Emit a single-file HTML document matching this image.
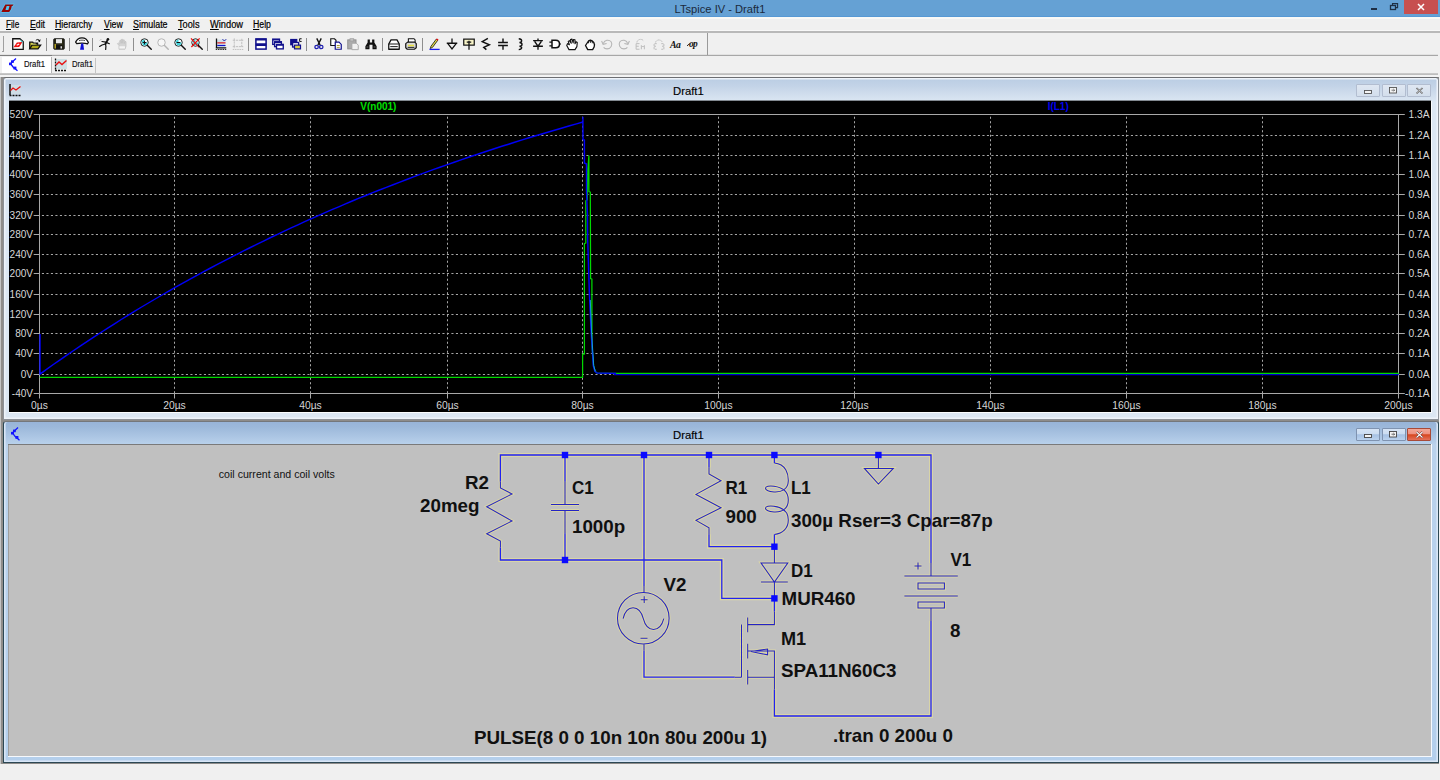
<!DOCTYPE html>
<html><head><meta charset="utf-8"><title>LTspice IV - Draft1</title>
<style>
html,body{margin:0;padding:0;}
body{width:1440px;height:780px;overflow:hidden;background:#f0f0f0;font-family:"Liberation Sans",sans-serif;position:relative;}
.abs{position:absolute;}
#titlebar{left:0;top:0;width:1440px;height:17px;background:#65a1d4;}
#title{left:0;top:0.6px;width:1440px;height:17px;line-height:17px;text-align:center;font-size:11.15px;color:#1b2a3c;letter-spacing:0px;}
#menubar{left:0;top:17px;width:1440px;height:15px;background:#f0f0f0;}
.mi{position:absolute;top:17.9px;height:13px;line-height:13px;font-size:10px;color:#000;white-space:nowrap;-webkit-text-stroke:0.2px #000;}
.mi u{text-decoration:underline;}
#toolbar{left:0;top:33px;width:1440px;height:22px;background:#f0f0f0;}
.hl{position:absolute;left:0;width:1440px;height:1px;}
.sep{position:absolute;top:37.5px;width:1px;height:13px;background:#8e8e8e;}
.ico{position:absolute;width:12px;height:12px;overflow:visible;}
#tabs{left:0;top:56px;width:1440px;height:19px;background:#f0f0f0;}
.tab{position:absolute;top:56.2px;height:17px;font-size:9.4px;line-height:16px;color:#111;white-space:nowrap;transform:scaleX(0.82);transform-origin:0 0;-webkit-text-stroke:0.15px #111;}
#mdi{left:0;top:76px;width:1438.5px;height:688px;background:#8e8c8a;border-left:1px solid #c4c4c4;box-sizing:border-box;}
.win{position:absolute;border-radius:3px 3px 0 0;}
.wtitle{position:absolute;font-size:11.3px;color:#000;white-space:nowrap;-webkit-text-stroke:0.15px #000;}
.wbtn{position:absolute;height:12px;width:22px;border:1px solid #8e9cb0;box-sizing:border-box;border-radius:1px;}
svg text{font-family:"Liberation Sans",sans-serif;}
#status{left:0;top:764px;width:1440px;height:16px;background:#f0f0f0;}
</style></head>
<body>
<div id="titlebar" class="abs"></div>
<div id="title" class="abs"><span id="tt">LTspice IV - Draft1</span></div>
<svg class="abs" style="left:0;top:0" width="16" height="17" viewBox="0 0 16 17">
<path d="M5.3 4.6 L13.6 4.4 L12.9 5.800 L11.800 6 L11 9.300 L9.200 12 L1.400 12 L1.800 11 Z" fill="none" stroke="#58c8f4" stroke-width="1.600" stroke-linejoin="round" opacity="0.8"/>
<path d="M5.3 4.6 L13.6 4.4 L12.9 5.800 L11.800 6 L11 9.300 L9.200 12 L1.400 12 L1.800 11 Z" fill="#960404"/>
<path d="M6.600 5.900 L9.500 5.900 L8.400 9.900 L5.500 9.900 Z" fill="#52c4f0"/>
</svg>
<div class="abs" style="left:1404px;top:0;width:34px;height:14px;background:#c75050;"></div>
<svg class="abs" style="left:1360px;top:0" width="80" height="17" viewBox="0 0 80 17">
<rect x="11" y="8" width="6" height="2" fill="#1e2f45"/>
<rect x="30.5" y="5.5" width="5" height="4" fill="none" stroke="#1e2f45" stroke-width="1.3"/>
<path d="M32.5 5 V3.6 H37.6 V7.6 H36" fill="none" stroke="#1e2f45" stroke-width="1.1"/>
<path d="M58 4 L64 10 M64 4 L58 10" stroke="#ffffff" stroke-width="1.5" fill="none"/>
</svg>
<div id="menubar" class="abs"></div>
<div class="hl" style="top:15.5px;height:1.5px;background:#5799d4"></div>
<div class="hl" style="top:17px;height:2px;background:#f9f9f6"></div>
<div class="hl" style="top:30px;height:1.5px;background:#f8f8f8"></div>
<div class="mi" style="left:5.5px;transform:scaleX(0.821);transform-origin:0 0"><u>F</u>ile</div>
<div class="mi" style="left:29.5px;transform:scaleX(0.872);transform-origin:0 0"><u>E</u>dit</div>
<div class="mi" style="left:55px;transform:scaleX(0.876);transform-origin:0 0"><u>H</u>ierarchy</div>
<div class="mi" style="left:103.7px;transform:scaleX(0.874);transform-origin:0 0"><u>V</u>iew</div>
<div class="mi" style="left:132.5px;transform:scaleX(0.888);transform-origin:0 0"><u>S</u>imulate</div>
<div class="mi" style="left:178px;transform:scaleX(0.921);transform-origin:0 0"><u>T</u>ools</div>
<div class="mi" style="left:209.5px;transform:scaleX(0.929);transform-origin:0 0"><u>W</u>indow</div>
<div class="mi" style="left:253px;transform:scaleX(0.872);transform-origin:0 0"><u>H</u>elp</div>
<div class="hl" style="top:31.4px;height:1.4px;background:#b9b9b9"></div>
<div id="toolbar" class="abs"></div>
<div class="hl" style="top:54px;height:1px;background:#e2e2e2;width:1438px"></div>
<div class="hl" style="top:55px;height:2px;background:linear-gradient(#b0b0b0,#8c8c8c);width:1438px"></div>
<div class="hl" style="top:55px;height:2px;background:linear-gradient(#888,#606060);width:51.5px"></div>
<div class="abs" style="left:3px;top:36px;width:1px;height:16px;background:#a0a0a0"></div>
<div class="abs" style="left:2px;top:51px;width:2px;height:1px;background:#a0a0a0"></div>
<div class="sep" style="left:45.5px"></div>
<div class="sep" style="left:69px"></div>
<div class="sep" style="left:92px"></div>
<div class="sep" style="left:132.5px"></div>
<div class="sep" style="left:207px"></div>
<div class="sep" style="left:247.5px"></div>
<div class="sep" style="left:306px"></div>
<div class="sep" style="left:382px"></div>
<div class="sep" style="left:422px"></div>
<div class="abs" style="left:707px;top:33px;width:1px;height:22px;background:#9a9a9a"></div>
<svg class="ico" style="left:12.00px;top:37.8px" width="12" height="12" viewBox="0 0 16 16"><path d="M1 1 H10.5 L15 5 V15.3 H1 Z" fill="#fff" stroke="#111" stroke-width="1.7"/><path d="M10.8 1.5 L14.5 5 L14.5 7.500 L12.500 6 Z" fill="#58d0d8"/><path d="M2 12.3 L6.5 6 L14 5.2 L9.5 12 Z" fill="#f01010"/><path d="M6.3 9.6 L9.6 8" stroke="#fff" stroke-width="1.5"/></svg>
<svg class="ico" style="left:29.25px;top:37.8px" width="12" height="12" viewBox="0 0 16 16"><path d="M1 14.5 V5.5 H5 L6 7 H11.5 V9" fill="#c8c030" stroke="#111" stroke-width="1.7"/><path d="M1 14.5 L4 9.5 H15.5 L12 14.5 Z" fill="#b0a818" stroke="#111" stroke-width="1.7"/><path d="M3 8 H9" stroke="#f0f090" stroke-width="1.2"/><path d="M9 3.5 C10.5 1.5 12.5 1.5 13.5 3" fill="none" stroke="#111" stroke-width="1.3"/><path d="M15.5 1.5 L14.5 5.5 L11.5 3.5 Z" fill="#111"/></svg>
<svg class="ico" style="left:52.50px;top:37.8px" width="12" height="12" viewBox="0 0 16 16"><rect x="1" y="1" width="14" height="14" rx="1" fill="#2a2a18" stroke="#111" stroke-width="1.2"/><rect x="4" y="1.5" width="8" height="5.5" fill="#e8e8e8"/><rect x="3.5" y="9.5" width="9" height="5" fill="#111"/><rect x="2" y="8" width="2" height="6" fill="#b0a020"/><rect x="10" y="11" width="2" height="3" fill="#ddd"/></svg>
<svg class="ico" style="left:75.75px;top:37.8px" width="12" height="12" viewBox="0 0 16 16"><path d="M-0.5 5.5 C1 2 5 -0.3 8 -0.3 C11 -0.3 15 2 16.5 6 L15.3 7.8 C12 6.4 4 6.4 1 7.4 Z" fill="#fff" stroke="#111" stroke-width="1.7" stroke-linejoin="round"/><path d="M4 3.600 C6.5 2.6 9.5 2.6 12 3.600" stroke="#111" stroke-width="1" fill="none"/><path d="M7 7.3 H9.6 L10.8 15.6 H5.4 Z" fill="#1010d8"/></svg>
<svg class="ico" style="left:99.00px;top:37.8px" width="12" height="12" viewBox="0 0 16 16"><circle cx="11.9" cy="1.7" r="1.7" fill="#111"/><path d="M11.5 2.5 L8.6 8" fill="none" stroke="#111" stroke-width="2.4" stroke-linecap="round"/><path d="M4 4.700 L9 5.5 L13.8 7.6 M8.6 8 L4 9.300 L0.8 11.3 M8.6 8 L9.2 11 L8.9 15.3" fill="none" stroke="#111" stroke-width="1.6" stroke-linecap="round"/><path d="M1 3.500 L3 1.5" stroke="#999" stroke-width="0.9"/></svg>
<svg class="ico" style="left:116.25px;top:37.8px" width="12" height="12" viewBox="0 0 16 16"><path d="M4 15 V10 L2 7.5 L3 6.5 L5 8 V3.5 L6.5 3 L7 7 V2 L8.5 1.5 L9 7 L9.5 2.5 L11 2.5 V7.5 L12 4.5 L13.3 5 V11 L12 15 Z" fill="#d4d4d4" stroke="#c2c2c2" stroke-width="1.1"/><rect x="4.500" y="11" width="7.500" height="3" fill="#f4f4f4"/></svg>
<svg class="ico" style="left:139.50px;top:37.8px" width="12" height="12" viewBox="0 0 16 16"><circle cx="6" cy="6" r="5" fill="#f4fcfc" stroke="#222" stroke-width="1.3"/><path d="M2 4 L6 1.5 L6 6 L10.5 6 L8.5 9.500 L4 10 Z" fill="#40d0d8"/><path d="M3.5 6 H8.5 M6 3.500 V8.500" stroke="#111" stroke-width="1.3"/><path d="M10 10 L15 15" stroke="#111" stroke-width="1.9" stroke-linecap="round"/></svg>
<svg class="ico" style="left:156.75px;top:37.8px" width="12" height="12" viewBox="0 0 16 16"><circle cx="6" cy="6" r="5" fill="#f6f6f6" stroke="#b4b4b4" stroke-width="1.3"/><path d="M10 10 L15 15" stroke="#b4b4b4" stroke-width="1.9" stroke-linecap="round"/></svg>
<svg class="ico" style="left:174.00px;top:37.8px" width="12" height="12" viewBox="0 0 16 16"><circle cx="6" cy="6" r="5" fill="#f4fcfc" stroke="#222" stroke-width="1.3"/><path d="M2 4 L6 1.5 L6 6 L10.5 6 L8.5 9.500 L4 10 Z" fill="#40d0d8"/><path d="M3.5 6 H8.500" stroke="#111" stroke-width="1.4"/><path d="M10 10 L15 15" stroke="#111" stroke-width="1.9" stroke-linecap="round"/></svg>
<svg class="ico" style="left:191.25px;top:37.8px" width="12" height="12" viewBox="0 0 16 16"><circle cx="6" cy="6" r="5" fill="#f4fcfc" stroke="#222" stroke-width="1.3"/><path d="M2 4 L6 1.5 L6 6 L10.5 6 L8.5 9.500 L4 10 Z" fill="#40d0d8"/><path d="M0 0.500 L11 12.500 M11.5 0.500 L0.500 12" stroke="#f01010" stroke-width="1.7"/><path d="M10 10 L15 15" stroke="#111" stroke-width="1.9" stroke-linecap="round"/></svg>
<svg class="ico" style="left:214.50px;top:37.8px" width="12" height="12" viewBox="0 0 16 16"><rect x="2" y="2" width="12" height="10" fill="#cfe0ea"/><path d="M2 0.5 V13 M1 13.2 H15" stroke="#111" stroke-width="1.7" fill="none"/><path d="M3 6.5 H14" stroke="#e01010" stroke-width="1.5"/><path d="M3 10 H14" stroke="#1010d0" stroke-width="1.5"/><path d="M10 1.5 L12.5 4 L15 1.5" fill="none" stroke="#1010a0" stroke-width="1.2"/><path d="M1 15.3 H15" stroke="#111" stroke-width="1.2" stroke-dasharray="2 1"/></svg>
<svg class="ico" style="left:231.75px;top:37.8px" width="12" height="12" viewBox="0 0 16 16"><path d="M3 0.5 V13.5 M1 11.5 H15 M1 3 H15 M13 1 V13" stroke="#bcbcbc" stroke-width="1.2" fill="none" stroke-dasharray="3 1"/><path d="M1 15.3 H15" stroke="#bcbcbc" stroke-width="1.2" stroke-dasharray="2 1"/></svg>
<svg class="ico" style="left:255.00px;top:37.8px" width="12" height="12" viewBox="0 0 16 16"><rect x="1.2" y="1.2" width="13.6" height="13.6" fill="#fff" stroke="#10108c" stroke-width="2"/><path d="M1 2.2 H15 M1 8 H15 M1 9.6 H15" stroke="#10108c" stroke-width="2.2"/></svg>
<svg class="ico" style="left:272.25px;top:37.8px" width="12" height="12" viewBox="0 0 16 16"><rect x="1" y="1.5" width="9" height="7" fill="#fff" stroke="#10108c" stroke-width="1.8"/><rect x="3.5" y="5" width="9" height="6.5" fill="#fff" stroke="#10108c" stroke-width="1.8"/><rect x="6" y="8.5" width="9" height="6" fill="#fff" stroke="#10108c" stroke-width="1.8"/><path d="M1 2.2 H10 M3.5 5.8 H12.5 M6 9.3 H15" stroke="#10108c" stroke-width="2"/></svg>
<svg class="ico" style="left:289.50px;top:37.8px" width="12" height="12" viewBox="0 0 16 16"><rect x="1" y="2" width="8" height="7" fill="#10108c" stroke="#10108c" stroke-width="1.6"/><rect x="3.5" y="6" width="8" height="6" fill="#fff" stroke="#10108c" stroke-width="1.8"/><rect x="6" y="9.5" width="8" height="5" fill="#d8d040" stroke="#10108c" stroke-width="1.6"/><path d="M15.5 1 H12.8 V4.6 H15.5" fill="none" stroke="#111" stroke-width="1.3"/></svg>
<svg class="ico" style="left:312.75px;top:37.8px" width="12" height="12" viewBox="0 0 16 16"><path d="M5 0.5 L9.5 9.5 M11 0.5 L6.5 9.5" stroke="#111" stroke-width="1.8" fill="none"/><circle cx="4.8" cy="12" r="2.3" fill="none" stroke="#2020b0" stroke-width="1.7"/><circle cx="11" cy="12" r="2.3" fill="none" stroke="#2020b0" stroke-width="1.7"/></svg>
<svg class="ico" style="left:330.00px;top:37.8px" width="12" height="12" viewBox="0 0 16 16"><path d="M1 1 H6 L8 3 V10 H1 Z" fill="#fff" stroke="#111" stroke-width="1.5"/><path d="M7 5.5 H12 L15 8.5 V15 H7 Z" fill="#fff" stroke="#10108c" stroke-width="1.6"/><path d="M9 10 H13 M9 12.5 H13" stroke="#a09020" stroke-width="1.2"/></svg>
<svg class="ico" style="left:347.25px;top:37.8px" width="12" height="12" viewBox="0 0 16 16"><rect x="1" y="2.5" width="11" height="12" fill="#acacac" stroke="#909090" stroke-width="1.3"/><rect x="4" y="1" width="5" height="3" fill="#c8c8c8" stroke="#9a9a9a" stroke-width="1"/><path d="M6.5 7 H12.5 L15 9.5 V15.5 H6.5 Z" fill="#f0f0f0" stroke="#a4a4a4" stroke-width="1.2"/></svg>
<svg class="ico" style="left:364.50px;top:37.8px" width="12" height="12" viewBox="0 0 16 16"><path d="M3.5 2 H6.5 V6 H9.5 V2 H12.5 V6 L15.5 11 V15 H10 V9 H6 V15 H0.5 V11 L3.5 6 Z" fill="#111"/><path d="M2 12 H4.5 M11.5 12 H14" stroke="#888" stroke-width="1"/></svg>
<svg class="ico" style="left:387.75px;top:37.8px" width="12" height="12" viewBox="0 0 16 16"><path d="M1 15 V8 L4 2.5 H12 L15 8 V15 Z" fill="#fff" stroke="#111" stroke-width="1.7" stroke-linejoin="round"/><path d="M1 8 H15 M3 11.5 H13" stroke="#111" stroke-width="1.3" fill="none"/></svg>
<svg class="ico" style="left:405.00px;top:37.8px" width="12" height="12" viewBox="0 0 16 16"><path d="M4.5 6 V1 H12 L13.5 2.5 V6" fill="#fff" stroke="#111" stroke-width="1.4"/><path d="M1 13 V7.5 L3.5 5.5 H13 L15 7.5 V13 L12.5 15 H3 Z" fill="#d8d8d8" stroke="#111" stroke-width="1.6" stroke-linejoin="round"/><path d="M4 10 H12" stroke="#e8e040" stroke-width="2"/><path d="M3.5 12.5 H12.5" stroke="#111" stroke-width="1.2"/></svg>
<svg class="ico" style="left:428.25px;top:37.8px" width="12" height="12" viewBox="0 0 16 16"><path d="M4 11 L11 1.5 L13 3 L6 12.5 L3 14 Z" fill="#e8e040" stroke="#222" stroke-width="1.2"/><path d="M10.5 2 L12 0.6 L14 2 L13 3.6 Z" fill="#e01010"/><path d="M2 15.2 H15.5" stroke="#1818f0" stroke-width="1.7"/></svg>
<svg class="ico" style="left:445.50px;top:37.8px" width="12" height="12" viewBox="0 0 16 16"><path d="M8 0.5 V7 M1 7 H15 M2.5 7.5 L8 14.5 L13.5 7.5" fill="none" stroke="#111" stroke-width="1.7"/></svg>
<svg class="ico" style="left:462.75px;top:37.8px" width="12" height="12" viewBox="0 0 16 16"><rect x="1" y="1.5" width="14" height="8" fill="#f8f4c8" stroke="#111" stroke-width="1.6"/><path d="M5 5.5 H11 M8 3.5 V15.5" stroke="#111" stroke-width="1.7"/></svg>
<svg class="ico" style="left:480.00px;top:37.8px" width="12" height="12" viewBox="0 0 16 16"><path d="M10.5 0.5 L3 5 L12.5 9 L5 12.5 L8.5 15.5" fill="none" stroke="#111" stroke-width="1.9"/></svg>
<svg class="ico" style="left:497.25px;top:37.8px" width="12" height="12" viewBox="0 0 16 16"><path d="M8 0.5 V6 M1.5 6 H14.5 M1.5 10 H14.5 M8 10 V15.5" fill="none" stroke="#111" stroke-width="1.9"/></svg>
<svg class="ico" style="left:514.50px;top:37.8px" width="12" height="12" viewBox="0 0 16 16"><path d="M5 1 C10 1.5 10 5.5 6 6 C10.5 6.5 10.5 10.5 6 11 C10 11.5 10 15 5 15.5" fill="none" stroke="#111" stroke-width="1.8"/></svg>
<svg class="ico" style="left:531.75px;top:37.8px" width="12" height="12" viewBox="0 0 16 16"><path d="M8 0.5 V3.5 M1.5 3.5 H14.5 M3.5 4.5 L8 11 L12.5 4.5 M1.5 11 H14.5 M8 11 V15.5" fill="none" stroke="#111" stroke-width="1.8"/></svg>
<svg class="ico" style="left:549.00px;top:37.8px" width="12" height="12" viewBox="0 0 16 16"><path d="M4 3 H9 C13 3 14 6 14 8 C14 10 13 13 9 13 H4 Z" fill="#fff" stroke="#111" stroke-width="2"/><path d="M0.5 5.5 H4 M0.5 10.5 H4 M14 8 H16" stroke="#111" stroke-width="1.6"/></svg>
<svg class="ico" style="left:566.25px;top:37.8px" width="12" height="12" viewBox="0 0 16 16"><path d="M4 15.5 L1 10 L2 7.5 L4.5 9 L3 4.5 L4.5 3.5 L7 7 L6 2 L8 1.5 L9.5 6.5 L10 2 L12 2.5 L12 7.5 L13.5 5 L15 6 L14.5 11.5 L12 15.5 Z" fill="#fff" stroke="#111" stroke-width="1.5" stroke-linejoin="round"/></svg>
<svg class="ico" style="left:583.50px;top:37.8px" width="12" height="12" viewBox="0 0 16 16"><path d="M5 15.5 L2 10 L4 7 L6 4 L8.5 3 L11 4 L13 6 L14 9 L13.5 12 L11.5 15.5 Z" fill="#fff" stroke="#111" stroke-width="1.8" stroke-linejoin="round"/><path d="M6 4 V7 M8.5 3 V6.5 M11 4 V7" stroke="#111" stroke-width="1.2"/></svg>
<svg class="ico" style="left:600.75px;top:37.8px" width="12" height="12" viewBox="0 0 16 16"><path d="M3 7.5 C4.500 2.500 10.500 1.500 13.500 5 C16 9 13 14.500 8 14.500 C6 14.500 4.500 13.800 3.500 12.500" fill="none" stroke="#b4b4b4" stroke-width="1.4"/><path d="M0.800 4 L2.800 8.500 L7.500 7.200" fill="none" stroke="#b4b4b4" stroke-width="1.4"/></svg>
<svg class="ico" style="left:618.00px;top:37.8px" width="12" height="12" viewBox="0 0 16 16"><path d="M13 7.500 C11.500 2.500 5.500 1.500 2.500 5 C0 9 3 14.500 8 14.500 C10 14.500 11.500 13.800 12.500 12.500" fill="none" stroke="#b4b4b4" stroke-width="1.4"/><path d="M15.200 4 L13.200 8.500 L8.500 7.200" fill="none" stroke="#b4b4b4" stroke-width="1.4"/></svg>
<svg class="ico" style="left:635.25px;top:37.8px" width="12" height="12" viewBox="0 0 16 16"><path d="M2.5 6 C3 1.5 9 0.5 11 3.5" fill="none" stroke="#bcbcbc" stroke-width="1.3" stroke-dasharray="3 1"/><path d="M1.5 15 V7.5 H6 M1.5 11 H5 M1.5 15 H6 M8.5 15 V10 L10.5 12 L12.5 10 V15" fill="none" stroke="#bcbcbc" stroke-width="1.3"/></svg>
<svg class="ico" style="left:652.50px;top:37.8px" width="12" height="12" viewBox="0 0 16 16"><path d="M3.5 6 C4 1.5 11.5 1.5 12.5 6" fill="none" stroke="#bcbcbc" stroke-width="1.3" stroke-dasharray="3 1"/><path d="M5 7.5 H1.5 V15 H5 M11 7.5 H14.5 V15 H11 M1.5 11 H4 M14.5 11 H12" fill="none" stroke="#bcbcbc" stroke-width="1.3" stroke-dasharray="3 1"/></svg>
<svg class="ico" style="left:669.75px;top:37.8px" width="12" height="12" viewBox="0 0 16 16"><text x="0" y="13" font-size="13" font-weight="bold" font-style="italic" fill="#111" style="font-family:'Liberation Serif',serif" letter-spacing="-0.8">Aa</text></svg>
<svg class="ico" style="left:687.00px;top:37.8px" width="12" height="12" viewBox="0 0 16 16"><text x="2.5" y="12" font-size="12.5" font-weight="bold" font-style="italic" fill="#111" style="font-family:'Liberation Serif',serif" letter-spacing="-0.8">op</text><path d="M0 10.5 L3.5 7.5" stroke="#111" stroke-width="1.2"/></svg>
<div id="tabs" class="abs"></div>
<div class="abs" style="left:2px;top:56.9px;width:49px;height:15.9px;background:#fff;"></div>
<div class="abs" style="left:51px;top:57px;width:1px;height:16px;background:#b4b4b4;"></div>
<div class="abs" style="left:95px;top:58px;width:1px;height:15px;background:#c4c4c4;"></div>
<div class="tab" style="left:24px"><b style="font-weight:normal">Draft1</b></div>
<div class="tab" style="left:72px">Draft1</div>
<svg class="abs" style="left:8px;top:58px" width="12" height="14" viewBox="0 0 12 14">
<path d="M8 0.5 L2.5 5.5 L5 9 L9.5 12.8" fill="none" stroke="#1414ff" stroke-width="1.3"/>
<rect x="3" y="2.3" width="2.8" height="2.6" fill="#1414ff"/><rect x="1" y="4.6" width="3" height="2.6" fill="#1414ff"/><rect x="5.4" y="8.6" width="3" height="2.8" fill="#1414ff"/>
</svg>
<svg class="abs" style="left:54px;top:58px" width="14" height="14" viewBox="0 0 14 14">
<rect x="2" y="1" width="11" height="10" fill="#cfe0e4"/>
<path d="M1.5 0.5 V12 M1 12.5 H13" stroke="#111" stroke-width="1.3" stroke-dasharray="2 1" fill="none"/>
<path d="M2 7 L5 4 L8 6.5 L12.5 2.5" fill="none" stroke="#e81010" stroke-width="1.4"/>
</svg>
<div class="hl" style="top:72.8px;height:2.1px;background:linear-gradient(#cecece,#b8b8b8);width:1438px"></div>
<div class="hl" style="top:75px;height:1.5px;background:#f3f3f3;z-index:2"></div>
<div id="mdi" class="abs"></div>
<div class="win" style="left:2.5px;top:76.5px;width:1436px;height:343px;box-sizing:border-box;border:1px solid #8d9299;border-top-color:#6c6e72;background:linear-gradient(#bacde3 0px,#c3d3e7 8px,#d6e2f0 20px,#dce7f3 24px,#dce7f3 100%);box-shadow:inset 0 0 0 1.5px #eef3fa;"></div>
<div class="abs" style="left:9px;top:412px;width:1423px;height:1.2px;background:#fafcfe"></div>
<div class="abs" style="left:1431px;top:100.5px;width:1.2px;height:312px;background:#fafcfe"></div>
<div class="wtitle" style="left:673px;top:85.4px;line-height:13px;">Draft1</div>
<svg class="abs" style="left:9px;top:84px" width="14" height="13" viewBox="0 0 14 13">
<rect x="1.5" y="1" width="10" height="9" fill="#cfdde6"/>
<path d="M1 0 V11" stroke="#111" stroke-width="1.500" fill="none"/><path d="M0.500 11.500 H12" stroke="#111" stroke-width="1.500" stroke-dasharray="2 1" fill="none"/>
<path d="M1.5 6.5 L4 4 L7 6 L11.5 2.5" fill="none" stroke="#e81010" stroke-width="1.3"/>
</svg>
<div class="wbtn" style="left:1356px;top:84px;width:24px;height:13px;background:linear-gradient(#dfe7f2,#d3deec);border-color:#b2bdd0;"></div>
<div class="wbtn" style="left:1382px;top:84px;width:24px;height:13px;background:linear-gradient(#dfe7f2,#d3deec);border-color:#b2bdd0;"></div>
<div class="wbtn" style="left:1407px;top:84px;width:24px;height:13px;background:linear-gradient(#dfe7f2,#d3deec);border-color:#b2bdd0;"></div>
<svg class="abs" style="left:1356px;top:84px" width="78" height="14" viewBox="0 0 78 14">
<rect x="8.5" y="6.5" width="7" height="3" fill="#f4f4f4" stroke="#555" stroke-width="0.9"/>
<rect x="33.5" y="3.5" width="7" height="5.5" fill="#f4f4f4" stroke="#555" stroke-width="0.9"/>
<path d="M35.5 6.2 H38.5 M37.4 5 L38.6 6.2 L37.4 7.4" fill="none" stroke="#555" stroke-width="0.8"/>
<path d="M60.5 4 L66.5 9.5 M66.5 4 L60.5 9.5" stroke="#555" stroke-width="1.6" fill="none"/>
<path d="M60.5 4 L66.5 9.5 M66.5 4 L60.5 9.5" stroke="#f4f4f4" stroke-width="0.6" fill="none"/>
</svg>
<svg class="abs" style="left:9px;top:100px" width="1422" height="312" viewBox="9 100 1422 312">
<rect x="9" y="100.6" width="1422" height="311.4" fill="#000"/>
<line x1="41.90" y1="135.50" x2="1398.80" y2="135.50" stroke="#a6a6a6" stroke-width="1" stroke-dasharray="2.1 2.4"/>
<line x1="41.90" y1="155.50" x2="1398.80" y2="155.50" stroke="#a6a6a6" stroke-width="1" stroke-dasharray="2.1 2.4"/>
<line x1="41.90" y1="174.50" x2="1398.80" y2="174.50" stroke="#a6a6a6" stroke-width="1" stroke-dasharray="2.1 2.4"/>
<line x1="41.90" y1="194.50" x2="1398.80" y2="194.50" stroke="#a6a6a6" stroke-width="1" stroke-dasharray="2.1 2.4"/>
<line x1="41.90" y1="215.50" x2="1398.80" y2="215.50" stroke="#a6a6a6" stroke-width="1" stroke-dasharray="2.1 2.4"/>
<line x1="41.90" y1="234.50" x2="1398.80" y2="234.50" stroke="#a6a6a6" stroke-width="1" stroke-dasharray="2.1 2.4"/>
<line x1="41.90" y1="254.50" x2="1398.80" y2="254.50" stroke="#a6a6a6" stroke-width="1" stroke-dasharray="2.1 2.4"/>
<line x1="41.90" y1="273.50" x2="1398.80" y2="273.50" stroke="#a6a6a6" stroke-width="1" stroke-dasharray="2.1 2.4"/>
<line x1="41.90" y1="294.50" x2="1398.80" y2="294.50" stroke="#a6a6a6" stroke-width="1" stroke-dasharray="2.1 2.4"/>
<line x1="41.90" y1="314.50" x2="1398.80" y2="314.50" stroke="#a6a6a6" stroke-width="1" stroke-dasharray="2.1 2.4"/>
<line x1="41.90" y1="333.50" x2="1398.80" y2="333.50" stroke="#a6a6a6" stroke-width="1" stroke-dasharray="2.1 2.4"/>
<line x1="41.90" y1="353.50" x2="1398.80" y2="353.50" stroke="#a6a6a6" stroke-width="1" stroke-dasharray="2.1 2.4"/>
<line x1="41.90" y1="374.50" x2="1398.80" y2="374.50" stroke="#a6a6a6" stroke-width="1" stroke-dasharray="2.1 2.4"/>
<line x1="174.50" y1="116.70" x2="174.50" y2="393.50" stroke="#a6a6a6" stroke-width="1" stroke-dasharray="2.1 2.4"/>
<line x1="310.50" y1="116.70" x2="310.50" y2="393.50" stroke="#a6a6a6" stroke-width="1" stroke-dasharray="2.1 2.4"/>
<line x1="447.50" y1="116.70" x2="447.50" y2="393.50" stroke="#a6a6a6" stroke-width="1" stroke-dasharray="2.1 2.4"/>
<line x1="582.50" y1="116.70" x2="582.50" y2="393.50" stroke="#a6a6a6" stroke-width="1" stroke-dasharray="2.1 2.4"/>
<line x1="718.50" y1="116.70" x2="718.50" y2="393.50" stroke="#a6a6a6" stroke-width="1" stroke-dasharray="2.1 2.4"/>
<line x1="854.50" y1="116.70" x2="854.50" y2="393.50" stroke="#a6a6a6" stroke-width="1" stroke-dasharray="2.1 2.4"/>
<line x1="990.50" y1="116.70" x2="990.50" y2="393.50" stroke="#a6a6a6" stroke-width="1" stroke-dasharray="2.1 2.4"/>
<line x1="1126.50" y1="116.70" x2="1126.50" y2="393.50" stroke="#a6a6a6" stroke-width="1" stroke-dasharray="2.1 2.4"/>
<line x1="1262.50" y1="116.70" x2="1262.50" y2="393.50" stroke="#a6a6a6" stroke-width="1" stroke-dasharray="2.1 2.4"/>
<path d="M33.7 114.5 H1404.8 M33.7 393.5 H1404.8 M39.5 114.5 V398.5 M1398.5 114.5 V398.5" stroke="#a8a8a8" stroke-width="1" fill="none"/>
<path d="M33.7 135.50 H39.7 M1398.8 135.50 H1404.8 M33.7 155.50 H39.7 M1398.8 155.50 H1404.8 M33.7 174.50 H39.7 M1398.8 174.50 H1404.8 M33.7 194.50 H39.7 M1398.8 194.50 H1404.8 M33.7 215.50 H39.7 M1398.8 215.50 H1404.8 M33.7 234.50 H39.7 M1398.8 234.50 H1404.8 M33.7 254.50 H39.7 M1398.8 254.50 H1404.8 M33.7 273.50 H39.7 M1398.8 273.50 H1404.8 M33.7 294.50 H39.7 M1398.8 294.50 H1404.8 M33.7 314.50 H39.7 M1398.8 314.50 H1404.8 M33.7 333.50 H39.7 M1398.8 333.50 H1404.8 M33.7 353.50 H39.7 M1398.8 353.50 H1404.8 M33.7 374.50 H39.7 M1398.8 374.50 H1404.8 M174.50 393.5 V398.5 M310.50 393.5 V398.5 M447.50 393.5 V398.5 M582.50 393.5 V398.5 M718.50 393.5 V398.5 M854.50 393.5 V398.5 M990.50 393.5 V398.5 M1126.50 393.5 V398.5 M1262.50 393.5 V398.5" stroke="#a8a8a8" stroke-width="1" fill="none"/>
<text x="33.1" y="118.00" text-anchor="end" font-size="10.1" fill="#d6d6d6">520V</text>
<text x="1429.6" y="118.00" text-anchor="end" font-size="10.3" fill="#d6d6d6">1.3A</text>
<text x="33.1" y="139.00" text-anchor="end" font-size="10.1" fill="#d6d6d6">480V</text>
<text x="1429.6" y="139.00" text-anchor="end" font-size="10.3" fill="#d6d6d6">1.2A</text>
<text x="33.1" y="159.00" text-anchor="end" font-size="10.1" fill="#d6d6d6">440V</text>
<text x="1429.6" y="159.00" text-anchor="end" font-size="10.3" fill="#d6d6d6">1.1A</text>
<text x="33.1" y="178.00" text-anchor="end" font-size="10.1" fill="#d6d6d6">400V</text>
<text x="1429.6" y="178.00" text-anchor="end" font-size="10.3" fill="#d6d6d6">1.0A</text>
<text x="33.1" y="198.00" text-anchor="end" font-size="10.1" fill="#d6d6d6">360V</text>
<text x="1429.6" y="198.00" text-anchor="end" font-size="10.3" fill="#d6d6d6">0.9A</text>
<text x="33.1" y="219.00" text-anchor="end" font-size="10.1" fill="#d6d6d6">320V</text>
<text x="1429.6" y="219.00" text-anchor="end" font-size="10.3" fill="#d6d6d6">0.8A</text>
<text x="33.1" y="238.00" text-anchor="end" font-size="10.1" fill="#d6d6d6">280V</text>
<text x="1429.6" y="238.00" text-anchor="end" font-size="10.3" fill="#d6d6d6">0.7A</text>
<text x="33.1" y="258.00" text-anchor="end" font-size="10.1" fill="#d6d6d6">240V</text>
<text x="1429.6" y="258.00" text-anchor="end" font-size="10.3" fill="#d6d6d6">0.6A</text>
<text x="33.1" y="277.00" text-anchor="end" font-size="10.1" fill="#d6d6d6">200V</text>
<text x="1429.6" y="277.00" text-anchor="end" font-size="10.3" fill="#d6d6d6">0.5A</text>
<text x="33.1" y="298.00" text-anchor="end" font-size="10.1" fill="#d6d6d6">160V</text>
<text x="1429.6" y="298.00" text-anchor="end" font-size="10.3" fill="#d6d6d6">0.4A</text>
<text x="33.1" y="318.00" text-anchor="end" font-size="10.1" fill="#d6d6d6">120V</text>
<text x="1429.6" y="318.00" text-anchor="end" font-size="10.3" fill="#d6d6d6">0.3A</text>
<text x="33.1" y="337.00" text-anchor="end" font-size="10.1" fill="#d6d6d6">80V</text>
<text x="1429.6" y="337.00" text-anchor="end" font-size="10.3" fill="#d6d6d6">0.2A</text>
<text x="33.1" y="357.00" text-anchor="end" font-size="10.1" fill="#d6d6d6">40V</text>
<text x="1429.6" y="357.00" text-anchor="end" font-size="10.3" fill="#d6d6d6">0.1A</text>
<text x="33.1" y="378.00" text-anchor="end" font-size="10.1" fill="#d6d6d6">0V</text>
<text x="1429.6" y="378.00" text-anchor="end" font-size="10.3" fill="#d6d6d6">0.0A</text>
<text x="33.1" y="397.00" text-anchor="end" font-size="10.1" fill="#d6d6d6">-40V</text>
<text x="1429.6" y="397.00" text-anchor="end" font-size="10.3" fill="#d6d6d6">-0.1A</text>
<text x="39.50" y="409.1" text-anchor="middle" font-size="10.3" fill="#d6d6d6">0µs</text>
<text x="174.50" y="409.1" text-anchor="middle" font-size="10.3" fill="#d6d6d6">20µs</text>
<text x="310.50" y="409.1" text-anchor="middle" font-size="10.3" fill="#d6d6d6">40µs</text>
<text x="447.50" y="409.1" text-anchor="middle" font-size="10.3" fill="#d6d6d6">60µs</text>
<text x="582.50" y="409.1" text-anchor="middle" font-size="10.3" fill="#d6d6d6">80µs</text>
<text x="718.50" y="409.1" text-anchor="middle" font-size="10.3" fill="#d6d6d6">100µs</text>
<text x="854.50" y="409.1" text-anchor="middle" font-size="10.3" fill="#d6d6d6">120µs</text>
<text x="990.50" y="409.1" text-anchor="middle" font-size="10.3" fill="#d6d6d6">140µs</text>
<text x="1126.50" y="409.1" text-anchor="middle" font-size="10.3" fill="#d6d6d6">160µs</text>
<text x="1262.50" y="409.1" text-anchor="middle" font-size="10.3" fill="#d6d6d6">180µs</text>
<text x="1398.50" y="409.1" text-anchor="middle" font-size="10.3" fill="#d6d6d6">200µs</text>
<text x="378.4" y="110.3" text-anchor="middle" font-size="10" font-weight="bold" fill="#00e000">V(n001)</text>
<text x="1058.2" y="110.3" text-anchor="middle" font-size="10" font-weight="bold" fill="#0000f0">I(L1)</text>
<polyline points="39.7,377.3 582.6,377.3 582.6,354.0 584.4,354.0 584.4,243.6 585.8,243.0 585.8,200.7 587.3,200.0 587.8,170.0 588.9,155.8 588.9,191.7 590.3,192.0 590.6,278.6 591.9,279.0 591.9,346.0 593.6,366.0 595.3,371.6 597.2,373.0 616.0,373.4 1398.8,373.4" fill="none" stroke="#00d800" stroke-width="1.25" stroke-linejoin="round"/>
<polyline points="40.0,334.0 40.0,374.2 46.5,369.3 53.3,364.5 60.1,359.8 66.9,355.1 73.7,350.5 80.5,345.9 87.3,341.4 94.1,336.9 100.9,332.5 107.7,328.1 114.5,323.8 121.2,319.5 128.0,315.3 134.8,311.2 141.6,307.0 148.4,303.0 155.2,299.0 162.0,295.0 168.8,291.1 175.6,287.2 182.4,283.4 189.2,279.6 196.0,275.8 202.8,272.1 209.6,268.5 216.4,264.9 223.2,261.3 230.0,257.8 236.8,254.3 243.6,250.9 250.4,247.5 257.2,244.1 264.0,240.8 270.7,237.5 277.5,234.3 284.3,231.1 291.1,227.9 297.9,224.8 304.7,221.7 311.5,218.6 318.3,215.6 325.1,212.6 331.9,209.7 338.7,206.8 345.5,203.9 352.3,201.0 359.1,198.2 365.9,195.5 372.7,192.7 379.5,190.0 386.3,187.3 393.1,184.7 399.9,182.1 406.7,179.5 413.5,176.9 420.2,174.4 427.0,171.9 433.8,169.4 440.6,167.0 447.4,164.6 454.2,162.2 461.0,159.9 467.8,157.5 474.6,155.2 481.4,153.0 488.2,150.7 495.0,148.5 501.8,146.3 508.6,144.2 515.4,142.0 522.2,139.9 529.0,137.8 535.8,135.8 542.6,133.7 549.4,131.7 556.2,129.7 563.0,127.8 569.7,125.8 576.5,123.9 582.9,122.0 582.9,117.2 583.0,139.6 584.4,140.0 584.4,163.0 586.5,164.0 586.5,191.0 587.5,215.0 587.7,240.0 589.4,294.0 591.2,333.0 593.3,365.7 595.0,371.5 597.0,373.0 616.0,373.4" fill="none" stroke="#0000f6" stroke-width="1.45" stroke-linejoin="round"/>
<polyline points="590.3,300 591.6,333 593.7,365.7 595.3,371.3" fill="none" stroke="#18b0d8" stroke-width="0.9"/>
<line x1="614" y1="374.5" x2="1398.8" y2="374.5" stroke="#0000d2" stroke-width="1.25"/>
</svg>
<div class="win" style="left:2.5px;top:420.5px;width:1436px;height:342.6px;box-sizing:border-box;border:1px solid #2c4854;border-top-color:#74777b;background:linear-gradient(#98b4d8 0px,#9cb8da 5px,#bad2ec 23px,#b4cfec 100%);box-shadow:inset 1.6px 0 0 #d9e6f6,inset -1.6px 0 0 #d9e6f6,inset 0 -1.6px 0 #d9e6f6;"></div>
<div class="abs" style="left:8px;top:756px;width:1424px;height:1.2px;background:#f6f9fd"></div>
<div class="abs" style="left:1431px;top:444px;width:1.2px;height:313px;background:#f6f9fd"></div>
<div class="wtitle" style="left:673px;top:429.4px;line-height:13px;">Draft1</div>
<svg class="abs" style="left:9.5px;top:427px" width="10" height="14" viewBox="0 0 10 14">
<path d="M8 0.5 L2.5 5.8 L5 9.300 L9.5 13.3" fill="none" stroke="#1414ff" stroke-width="1.3"/>
<rect x="3" y="2.600" width="2.800" height="2.600" fill="#1414ff"/><rect x="1" y="4.900" width="3" height="2.600" fill="#1414ff"/><rect x="5.400" y="9" width="3" height="2.800" fill="#1414ff"/>
</svg>
<div class="wbtn" style="left:1356px;top:428px;width:24px;height:13px;background:linear-gradient(#d6e4f5 0,#cbdcf1 45%,#a6c1e3 52%,#bad2ee 100%);border-color:#7f93b0;"></div>
<div class="wbtn" style="left:1382px;top:428px;width:24px;height:13px;background:linear-gradient(#d6e4f5 0,#cbdcf1 45%,#a6c1e3 52%,#bad2ee 100%);border-color:#7f93b0;"></div>
<div class="wbtn" style="left:1407px;top:428px;width:24px;height:13px;background:linear-gradient(#f2a898 0,#ee9080 45%,#d6461e 52%,#e4705a 100%);border-color:#a84a38;"></div>
<svg class="abs" style="left:1356px;top:428px" width="78" height="14" viewBox="0 0 78 14">
<rect x="8.5" y="6.5" width="7" height="3" fill="#f4f4f4" stroke="#444" stroke-width="0.9"/>
<rect x="33.5" y="3.5" width="7" height="5.5" fill="#f4f4f4" stroke="#444" stroke-width="0.9"/>
<path d="M35.5 6.2 H38.5 M37.4 5 L38.6 6.2 L37.4 7.4" fill="none" stroke="#444" stroke-width="0.8"/>
<path d="M60.5 4 L66.5 9.5 M66.5 4 L60.5 9.5" stroke="#5a2020" stroke-width="2.2" fill="none"/>
<path d="M60.5 4 L66.5 9.5 M66.5 4 L60.5 9.5" stroke="#ffffff" stroke-width="1.1" fill="none"/>
</svg>
<svg class="abs" style="left:8px;top:444px" width="1423" height="312" viewBox="8 444 1423 312">
<rect x="8" y="444" width="1423" height="312" fill="#c0c0c0"/>
<path d="M8 756 V444.5 H1431" stroke="#7a7a7a" stroke-width="1" fill="none"/>
<path d="M500.4 481.5 V455 H931 V563 M500.4 547.5 V560 H721.8 V598.4 H774.4 V611.6 M565 455 V481.8 M565 533.2 V560 M644 455 V586 M644 650.8 V677.2 H734.7 M709 455 V467.5 M709 534.3 V546.7 H774.4 M774.4 455 V463 M774.4 534.4 V547 M931 621 V716 H774.4 V689.4" fill="none" stroke="#d9d5a6" stroke-width="3.9"/>
<path d="M500.4 481.5 V488 L512 494 L486.7 506.7 L512 521 L486.7 533.8 L500.4 541 V547.5 M565 481.8 V504.5 M551 504.5 H579 M551 510.5 H579 M565 510.5 V533.2 M709 467.5 V474 L721 480.7 L696 494.4 L721 507.8 L696 520.4 L709 527.8 V534.3 M878.4 455 V468.4 M864.4 468.4 H893.3 L878.4 484 Z M931 563 V576 M904.4 576 H957.8 M904.4 596 H957.8 M931 608 V621 M918 583 H944.4 V589 H918 Z M918 602 H944.4 V608 H918 Z M914.5 566 H921.5 M918 562.5 V569.5 M774.4 547 V563 M761 563 H787.8 L774.4 582 Z M761 582 H787.8 M774.4 582 V598.4 M774.4 611.6 V624.6 H747.7 M734.7 677.2 H741.5 M741.5 624.6 V677.2 M747.7 617.6 V632.3 M747.7 643.8 V658.5 M747.7 670 V684.6 M747.7 651 H774.4 V689.4 M747.7 677.2 H774.4 M751 651.6 L760.5 650 L767.6 649 V654.8 L760.5 653.4 Z M644 586 V592.5 M644 644.3 V650.8 M640.8 599.7 H647.6 M644.2 596.3 V603.1 M640.5 638.2 H647.5 M623.1 618.6 C626.5 604 639.5 604 643.3 618.6 C647 633 660 633 663.8 618.6 M774.4 463 C786 464 788.5 474 788.3 481 C788 489 782 492.5 774 492 C768.5 491.5 765.5 490 765.5 488.3 C765.5 486.5 769 485.6 774 486.3 C783 487.5 788.3 492 788.3 500 C788.3 508 783 512.5 774 512 C768.5 511.5 765.5 510 765.5 508.3 C765.5 506.5 769 505.6 774 506.3 C783 507.5 788.3 512 788.3 520 C788.3 528 783 533.5 774.4 534.4" fill="none" stroke="#d9d5a6" stroke-width="2.9"/>
<circle cx="643.3" cy="618.2" r="25.8" fill="none" stroke="#d9d5a6" stroke-width="2.9"/>
<path d="M500.4 481.5 V488 L512 494 L486.7 506.7 L512 521 L486.7 533.8 L500.4 541 V547.5 M565 481.8 V504.5 M551 504.5 H579 M551 510.5 H579 M565 510.5 V533.2 M709 467.5 V474 L721 480.7 L696 494.4 L721 507.8 L696 520.4 L709 527.8 V534.3 M878.4 455 V468.4 M864.4 468.4 H893.3 L878.4 484 Z M931 563 V576 M904.4 576 H957.8 M904.4 596 H957.8 M931 608 V621 M918 583 H944.4 V589 H918 Z M918 602 H944.4 V608 H918 Z M914.5 566 H921.5 M918 562.5 V569.5 M774.4 547 V563 M761 563 H787.8 L774.4 582 Z M761 582 H787.8 M774.4 582 V598.4 M774.4 611.6 V624.6 H747.7 M734.7 677.2 H741.5 M741.5 624.6 V677.2 M747.7 617.6 V632.3 M747.7 643.8 V658.5 M747.7 670 V684.6 M747.7 651 H774.4 V689.4 M747.7 677.2 H774.4 M751 651.6 L760.5 650 L767.6 649 V654.8 L760.5 653.4 Z M644 586 V592.5 M644 644.3 V650.8 M640.8 599.7 H647.6 M644.2 596.3 V603.1 M640.5 638.2 H647.5 M623.1 618.6 C626.5 604 639.5 604 643.3 618.6 C647 633 660 633 663.8 618.6 M774.4 463 C786 464 788.5 474 788.3 481 C788 489 782 492.5 774 492 C768.5 491.5 765.5 490 765.5 488.3 C765.5 486.5 769 485.6 774 486.3 C783 487.5 788.3 492 788.3 500 C788.3 508 783 512.5 774 512 C768.5 511.5 765.5 510 765.5 508.3 C765.5 506.5 769 505.6 774 506.3 C783 507.5 788.3 512 788.3 520 C788.3 528 783 533.5 774.4 534.4" fill="none" stroke="#2424c4" stroke-width="1.05"/>
<circle cx="643.3" cy="618.2" r="25.8" fill="none" stroke="#2424c4" stroke-width="1.05"/>
<path d="M500.4 481.5 V455 H931 V563 M500.4 547.5 V560 H721.8 V598.4 H774.4 V611.6 M565 455 V481.8 M565 533.2 V560 M644 455 V586 M644 650.8 V677.2 H734.7 M709 455 V467.5 M709 534.3 V546.7 H774.4 M774.4 455 V463 M774.4 534.4 V547 M931 621 V716 H774.4 V689.4" fill="none" stroke="#2222f0" stroke-width="1.3"/>
<rect x="561.8" y="451.8" width="6.4" height="6.4" fill="#0a0aff"/>
<rect x="640.8" y="451.8" width="6.4" height="6.4" fill="#0a0aff"/>
<rect x="705.8" y="451.8" width="6.4" height="6.4" fill="#0a0aff"/>
<rect x="771.2" y="451.8" width="6.4" height="6.4" fill="#0a0aff"/>
<rect x="875.2" y="451.8" width="6.4" height="6.4" fill="#0a0aff"/>
<rect x="561.8" y="556.8" width="6.4" height="6.4" fill="#0a0aff"/>
<rect x="771.2" y="543.5" width="6.4" height="6.4" fill="#0a0aff"/>
<rect x="771.2" y="595.2" width="6.4" height="6.4" fill="#0a0aff"/>
<text transform="translate(489 488.5) scale(1.067 1)" text-anchor="end" font-weight="bold" font-size="17.6" fill="#101010">R2</text>
<text transform="translate(479.5 511.5) scale(1.067 1)" text-anchor="end" font-weight="bold" font-size="17.6" fill="#101010">20meg</text>
<text transform="translate(572 494) scale(0.965 1)" text-anchor="start" font-weight="bold" font-size="17.6" fill="#101010">C1</text>
<text transform="translate(572 532.5) scale(1.067 1)" text-anchor="start" font-weight="bold" font-size="17.6" fill="#101010">1000p</text>
<text transform="translate(725.5 494) scale(0.965 1)" text-anchor="start" font-weight="bold" font-size="17.6" fill="#101010">R1</text>
<text transform="translate(725.5 522.8) scale(1.067 1)" text-anchor="start" font-weight="bold" font-size="17.6" fill="#101010">900</text>
<text transform="translate(791 494) scale(0.965 1)" text-anchor="start" font-weight="bold" font-size="17.6" fill="#101010">L1</text>
<text transform="translate(791 526.8) scale(1.067 1)" text-anchor="start" font-weight="bold" font-size="17.6" fill="#101010">300µ Rser=3 Cpar=87p</text>
<text transform="translate(791 576.5) scale(0.965 1)" text-anchor="start" font-weight="bold" font-size="17.6" fill="#101010">D1</text>
<text transform="translate(781.5 604.6) scale(1.067 1)" text-anchor="start" font-weight="bold" font-size="17.6" fill="#101010">MUR460</text>
<text transform="translate(663.5 591) scale(1.067 1)" text-anchor="start" font-weight="bold" font-size="17.6" fill="#101010">V2</text>
<text transform="translate(781 644.6) scale(1.03 1)" text-anchor="start" font-weight="bold" font-size="17.6" fill="#101010">M1</text>
<text transform="translate(781 676.8) scale(1.067 1)" text-anchor="start" font-weight="bold" font-size="17.6" fill="#101010">SPA11N60C3</text>
<text transform="translate(950.5 565.8) scale(0.965 1)" text-anchor="start" font-weight="bold" font-size="17.6" fill="#101010">V1</text>
<text transform="translate(950 637.4) scale(1.067 1)" text-anchor="start" font-weight="bold" font-size="17.6" fill="#101010">8</text>
<text transform="translate(474 743.6) scale(1.067 1)" text-anchor="start" font-weight="bold" font-size="17.6" fill="#101010">PULSE(8 0 0 10n 10n 80u 200u 1)</text>
<text transform="translate(833 742) scale(1.067 1)" text-anchor="start" font-weight="bold" font-size="17.6" fill="#101010">.tran 0 200u 0</text>
<text x="218.8" y="477.8" font-size="10.4" fill="#111" textLength="116" lengthAdjust="spacingAndGlyphs">coil current and coil volts</text>
</svg>
<div id="status" class="abs"></div>
</body></html>
